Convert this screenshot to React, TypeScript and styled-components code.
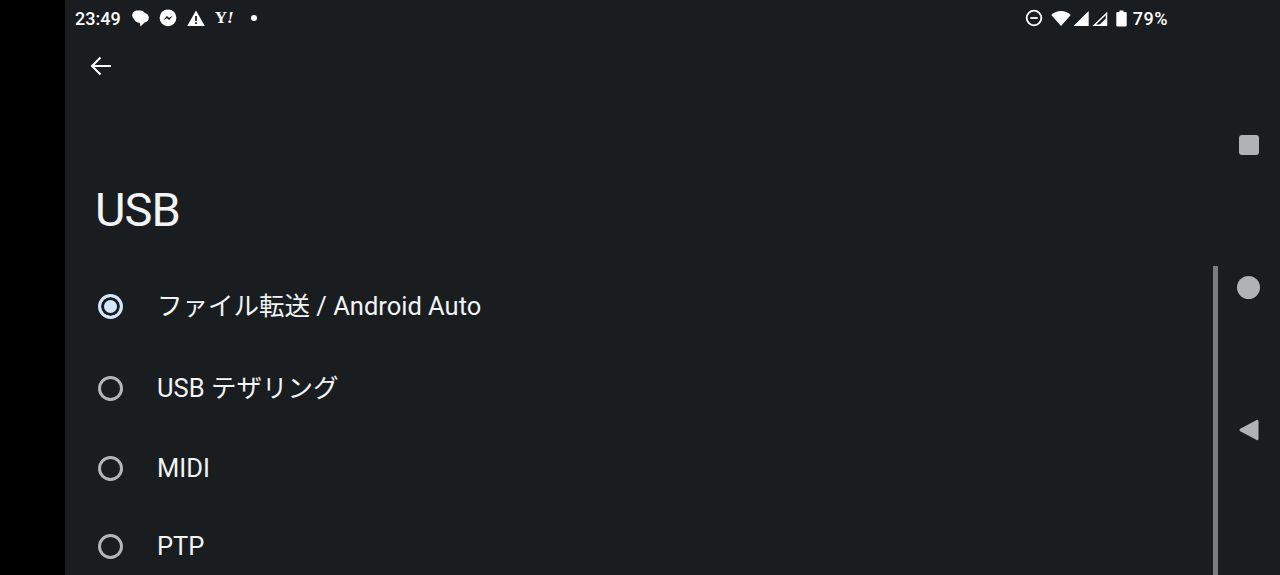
import styled, { createGlobalStyle } from 'styled-components';

const GlobalStyle = createGlobalStyle`
  html, body { margin: 0; padding: 0; background: #000; }
  body { font-family: Roboto, "Noto Sans CJK JP", sans-serif; overflow: hidden; }
`;

const options = [
  { label: 'ファイル転送 / Android Auto', selected: true, height: 80 },
  { label: 'USB テザリング', height: 84 },
  { label: 'MIDI', height: 76 },
  { label: 'PTP', height: 80 },
];

const App = () => (
  <>
    <GlobalStyle />
    <Screen>
      <Panel>
        <StatusBar>
          <StatusGroup>
            <Clock>23:49</Clock>
            <NotifIcons>
              <svg width="17" height="18" viewBox="0 0 17 18" fill="#fff">
                <path d="M5.500 1.500h3c2 0 3.500 1 4 2.500L4 11C1.800 10.300 0.200 8.800 0.200 6.500 0.200 3.500 2.500 1.500 5.500 1.500z" />
                <path d="M9.500 3.500c4 0 7.300 1.900 7.300 5.200 0 2.600-1.900 4.300-4.300 4.900L8.500 17.500l-.8-3.700C4.300 13.500 2 11.500 2 8.700c0-3.300 3.500-5.200 7.500-5.200z" />
              </svg>
              <svg width="18" height="18" viewBox="0 0 18 18">
                <circle cx="9" cy="8.800" r="8.400" fill="#fff" />
                <path d="M4 11.500l3.800-4.600 2.300 1.900 3.800-2.200-3.700 4.500-2.400-1.900z" fill="#1a1d20" />
              </svg>
              <svg width="18" height="17" viewBox="0 0 18 17">
                <path d="M9 0.500L17.800 16H0.200z" fill="#fff" />
                <path d="M8.100 6h1.800v5H8.100zM8.100 12.200h1.800v1.800H8.100z" fill="#1a1d20" />
              </svg>
              <YahooMark>Y<i>!</i></YahooMark>
              <Dot />
            </NotifIcons>
          </StatusGroup>
          <SystemIcons>
            <svg width="18" height="18" viewBox="0 0 18 18" fill="none" stroke="#fff" strokeWidth="1.800">
              <circle cx="9" cy="9" r="7.300" />
              <path d="M5.300 9h7.400" />
            </svg>
            <WifiSignal>
              <svg width="20" height="17" viewBox="0 0 20 17">
                <path d="M10 16L0.300 5C3 2.300 6.300 1 10 1s7 1.300 9.700 4z" fill="#fff" />
              </svg>
              <svg width="16" height="17" viewBox="0 0 16 17">
                <path d="M15.700 1V16H0.500z" fill="#fff" />
              </svg>
              <svg width="17" height="17" viewBox="0 0 17 17">
                <path d="M15.500 3.500V15.200H3.300z" fill="none" stroke="#fff" strokeWidth="1.500" />
                <path d="M8 15.200L15.500 8v7.200z" fill="#fff" />
              </svg>
            </WifiSignal>
            <svg width="11" height="17" viewBox="0 0 11 17">
              <path d="M3.500 0.500h4v1.500h2a1.200 1.200 0 0 1 1.200 1.200v12.100a1.200 1.200 0 0 1-1.200 1.200H1.500a1.200 1.200 0 0 1-1.200-1.200V3.200A1.200 1.200 0 0 1 1.500 2h2z" fill="#fff" />
            </svg>
            <Percent>79%</Percent>
          </SystemIcons>
        </StatusBar>

        <BackRow>
          <svg width="24" height="24" viewBox="0 0 24 24" fill="none" stroke="#fff" strokeWidth="2">
            <path d="M22 12H3M11.500 3.500L3 12l8.500 8.500" />
          </svg>
        </BackRow>

        <Title>USB</Title>

        <OptionList>
          {options.map((option) => (
            <OptionRow key={option.label} $height={option.height}>
              <Radio $selected={option.selected} />
              <OptionLabel>{option.label}</OptionLabel>
            </OptionRow>
          ))}
        </OptionList>

        <ScrollThumb />
      </Panel>

      <NavRail>
        <NavSquare />
        <NavCircle />
        <svg width="20" height="22" viewBox="0 0 20 22">
          <path d="M19.500 2v18a1.200 1.200 0 0 1-1.800 1L1.200 12.200a1.400 1.400 0 0 1 0-2.400L17.700 1a1.200 1.200 0 0 1 1.800 1z" fill="#b0b3b6" />
        </svg>
      </NavRail>
    </Screen>
  </>
);

export default App;

const Screen = styled.div`
  width: 1280px;
  height: 575px;
  overflow: hidden;
  display: flex;
  padding-left: 65px;
  box-sizing: border-box;
  background: #000;
`;

const Panel = styled.div`
  position: relative;
  flex: 1;
  background: #1a1d20;
`;

const StatusBar = styled.div`
  height: 36px;
  display: flex;
  justify-content: space-between;
  align-items: center;
  padding: 0 112px 0 10px;
  color: #fff;
`;

const StatusGroup = styled.div`
  display: flex;
  align-items: center;
  gap: 11px;
`;

const Clock = styled.span`
  font-size: 18px;
  font-weight: 500;
`;

const NotifIcons = styled.div`
  display: flex;
  align-items: center;
  gap: 10px;
`;

const YahooMark = styled.span`
  font-family: "Liberation Serif", serif;
  font-size: 17px;
  font-weight: 700;
  width: 22px;
`;

const Dot = styled.span`
  width: 6px;
  height: 6px;
  border-radius: 50%;
  background: #fff;
  margin-left: 4px;
`;

const SystemIcons = styled.div`
  display: flex;
  align-items: center;
  gap: 8px;
`;

const WifiSignal = styled.div`
  display: flex;
  align-items: center;
  gap: 2px;
`;

const Percent = styled.span`
  font-size: 18px;
  font-weight: 500;
  letter-spacing: 0.500px;
  margin-left: -2px;
`;

const BackRow = styled.div`
  height: 24px;
  padding: 18px 0 0 24px;
  display: flex;
  align-items: center;
`;

const Title = styled.h1`
  margin: 106px 0 0;
  padding-left: 30px;
  font-size: 47px;
  font-weight: 400;
  letter-spacing: -1px;
  line-height: 52px;
  color: #f1f3f4;
`;

const OptionList = styled.div`
  margin-top: 30px;
  padding-left: 33px;
  display: flex;
  flex-direction: column;
`;

const OptionRow = styled.div<{ $height: number }>`
  height: ${(p) => p.$height}px;
  display: flex;
  align-items: center;
  gap: 34px;
`;

const Radio = styled.span<{ $selected?: boolean }>`
  width: 25px;
  height: 25px;
  box-sizing: border-box;
  border-radius: 50%;
  border: 3px solid ${(p) => (p.$selected ? '#d2e7fb' : '#b4b7ba')};
  background: ${(p) => (p.$selected ? '#d2e7fb' : 'transparent')};
  box-shadow: ${(p) => (p.$selected ? 'inset 0 0 0 3px #1a1d20' : 'none')};
`;

const OptionLabel = styled.span`
  font-size: 25.500px;
  line-height: 30px;
  color: #f1f3f4;
`;

const ScrollThumb = styled.div`
  position: absolute;
  left: 1148px;
  top: 266px;
  width: 5px;
  bottom: 0;
  background: #7a7d80;
`;

const NavRail = styled.div`
  position: absolute;
  top: 135px;
  right: 20px;
  display: flex;
  flex-direction: column;
  align-items: center;
  gap: 120px;
`;

const NavSquare = styled.div`
  width: 20px;
  height: 20px;
  margin-bottom: 1px;
  border-radius: 3px;
  background: #b0b3b6;
`;

const NavCircle = styled.div`
  width: 23px;
  height: 23px;
  border-radius: 50%;
  background: #b0b3b6;
`;
